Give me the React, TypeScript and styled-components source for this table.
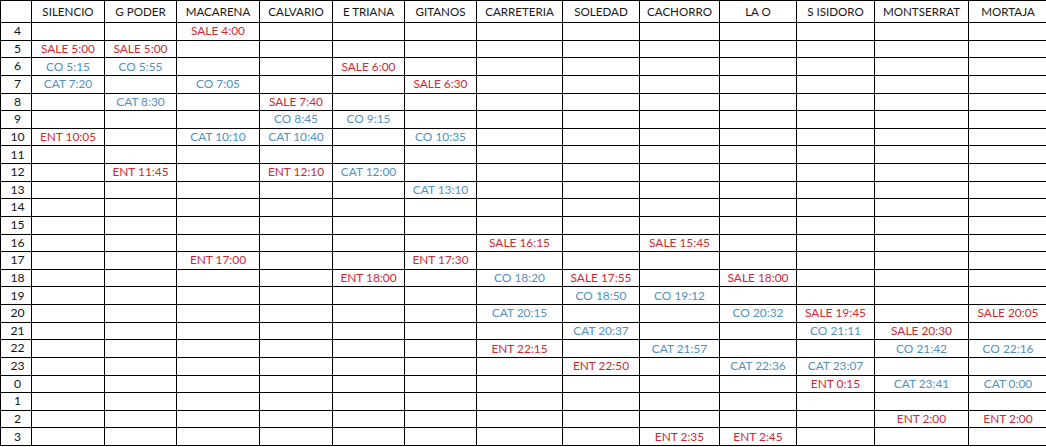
import React from "react";
import styled, { createGlobalStyle } from "styled-components";

const GlobalStyle = createGlobalStyle`
  html, body {
    margin: 0;
    padding: 0;
    background: #ffffff;
    overflow: hidden;
  }
  body {
    font-family: "Lato", "Liberation Sans", sans-serif;
  }
`;

type Kind = "sale" | "co" | "cat" | "ent";

const COLUMNS = [
  "SILENCIO",
  "G PODER",
  "MACARENA",
  "CALVARIO",
  "E TRIANA",
  "GITANOS",
  "CARRETERIA",
  "SOLEDAD",
  "CACHORRO",
  "LA O",
  "S ISIDORO",
  "MONTSERRAT",
  "MORTAJA",
];

const HOURS = [4, 5, 6, 7, 8, 9, 10, 11, 12, 13, 14, 15, 16, 17, 18, 19, 20, 21, 22, 23, 0, 1, 2, 3];

type Entry = [number, string, Kind, string];

const ENTRIES: Entry[] = [
  [4, "MACARENA", "sale", "SALE 4:00"],
  [5, "SILENCIO", "sale", "SALE 5:00"],
  [5, "G PODER", "sale", "SALE 5:00"],
  [6, "SILENCIO", "co", "CO 5:15"],
  [6, "G PODER", "co", "CO 5:55"],
  [6, "E TRIANA", "sale", "SALE 6:00"],
  [7, "SILENCIO", "cat", "CAT 7:20"],
  [7, "MACARENA", "co", "CO 7:05"],
  [7, "GITANOS", "sale", "SALE 6:30"],
  [8, "G PODER", "cat", "CAT 8:30"],
  [8, "CALVARIO", "sale", "SALE 7:40"],
  [9, "CALVARIO", "co", "CO 8:45"],
  [9, "E TRIANA", "co", "CO 9:15"],
  [10, "SILENCIO", "ent", "ENT 10:05"],
  [10, "MACARENA", "cat", "CAT 10:10"],
  [10, "CALVARIO", "cat", "CAT 10:40"],
  [10, "GITANOS", "co", "CO 10:35"],
  [12, "G PODER", "ent", "ENT 11:45"],
  [12, "CALVARIO", "ent", "ENT 12:10"],
  [12, "E TRIANA", "cat", "CAT 12:00"],
  [13, "GITANOS", "cat", "CAT 13:10"],
  [16, "CARRETERIA", "sale", "SALE 16:15"],
  [16, "CACHORRO", "sale", "SALE 15:45"],
  [17, "MACARENA", "ent", "ENT 17:00"],
  [17, "GITANOS", "ent", "ENT 17:30"],
  [18, "E TRIANA", "ent", "ENT 18:00"],
  [18, "CARRETERIA", "co", "CO 18:20"],
  [18, "SOLEDAD", "sale", "SALE 17:55"],
  [18, "LA O", "sale", "SALE 18:00"],
  [19, "SOLEDAD", "co", "CO 18:50"],
  [19, "CACHORRO", "co", "CO 19:12"],
  [20, "CARRETERIA", "cat", "CAT 20:15"],
  [20, "LA O", "co", "CO 20:32"],
  [20, "S ISIDORO", "sale", "SALE 19:45"],
  [20, "MORTAJA", "sale", "SALE 20:05"],
  [21, "SOLEDAD", "cat", "CAT 20:37"],
  [21, "S ISIDORO", "co", "CO 21:11"],
  [21, "MONTSERRAT", "sale", "SALE 20:30"],
  [22, "CARRETERIA", "ent", "ENT 22:15"],
  [22, "CACHORRO", "cat", "CAT 21:57"],
  [22, "MONTSERRAT", "co", "CO 21:42"],
  [22, "MORTAJA", "co", "CO 22:16"],
  [23, "SOLEDAD", "ent", "ENT 22:50"],
  [23, "LA O", "cat", "CAT 22:36"],
  [23, "S ISIDORO", "cat", "CAT 23:07"],
  [0, "S ISIDORO", "ent", "ENT 0:15"],
  [0, "MONTSERRAT", "cat", "CAT 23:41"],
  [0, "MORTAJA", "cat", "CAT 0:00"],
  [2, "MONTSERRAT", "ent", "ENT 2:00"],
  [2, "MORTAJA", "ent", "ENT 2:00"],
  [3, "CACHORRO", "ent", "ENT 2:35"],
  [3, "LA O", "ent", "ENT 2:45"],
];

const lookup = new Map<string, { kind: Kind; text: string }>();
ENTRIES.forEach(([h, c, kind, text]) => lookup.set(`${h}|${c}`, { kind, text }));

const KIND_COLOR: Record<Kind, string> = {
  sale: "#cc2a33",
  ent: "#cc2a33",
  co: "#5290c2",
  cat: "#5290c2",
};

const Sheet = styled.div`
  display: grid;
  grid-template-columns: 30px 72px 71px 82px 72px 71px 71px 85px 76px 79px 76px 77px 93px 78px;
  grid-template-rows: 21px repeat(24, 1fr);
  gap: 1px;
  padding: 1px 0 1px 1px;
  height: 446px;
  box-sizing: border-box;
  width: 1047px;
  background: #000000;
`;

const Cell = styled.div`
  background: #ffffff;
  display: flex;
  align-items: center;
  justify-content: center;
  font-size: 11.9px;
  line-height: 1;
  white-space: nowrap;
  overflow: hidden;
`;

const HeaderCell = styled(Cell)`
  color: #151515;
  font-size: 11.6px;
  padding-top: 1px;
`;

const HourCell = styled(Cell)`
  color: #151515;
  font-size: 12.2px;
  padding-left: 3px;
`;

const DataCell = styled(Cell)<{ $kind?: Kind }>`
  color: ${(p) => (p.$kind ? KIND_COLOR[p.$kind] : "#000")};
`;

export default function App() {
  return (
    <>
      <GlobalStyle />
      <Sheet>
        <HeaderCell />
        {COLUMNS.map((c) => (
          <HeaderCell key={c}>{c}</HeaderCell>
        ))}
        {HOURS.map((h) => (
          <React.Fragment key={h}>
            <HourCell>{h}</HourCell>
            {COLUMNS.map((c) => {
              const e = lookup.get(`${h}|${c}`);
              return (
                <DataCell key={c} $kind={e?.kind}>
                  {e?.text}
                </DataCell>
              );
            })}
          </React.Fragment>
        ))}
      </Sheet>
    </>
  );
}
